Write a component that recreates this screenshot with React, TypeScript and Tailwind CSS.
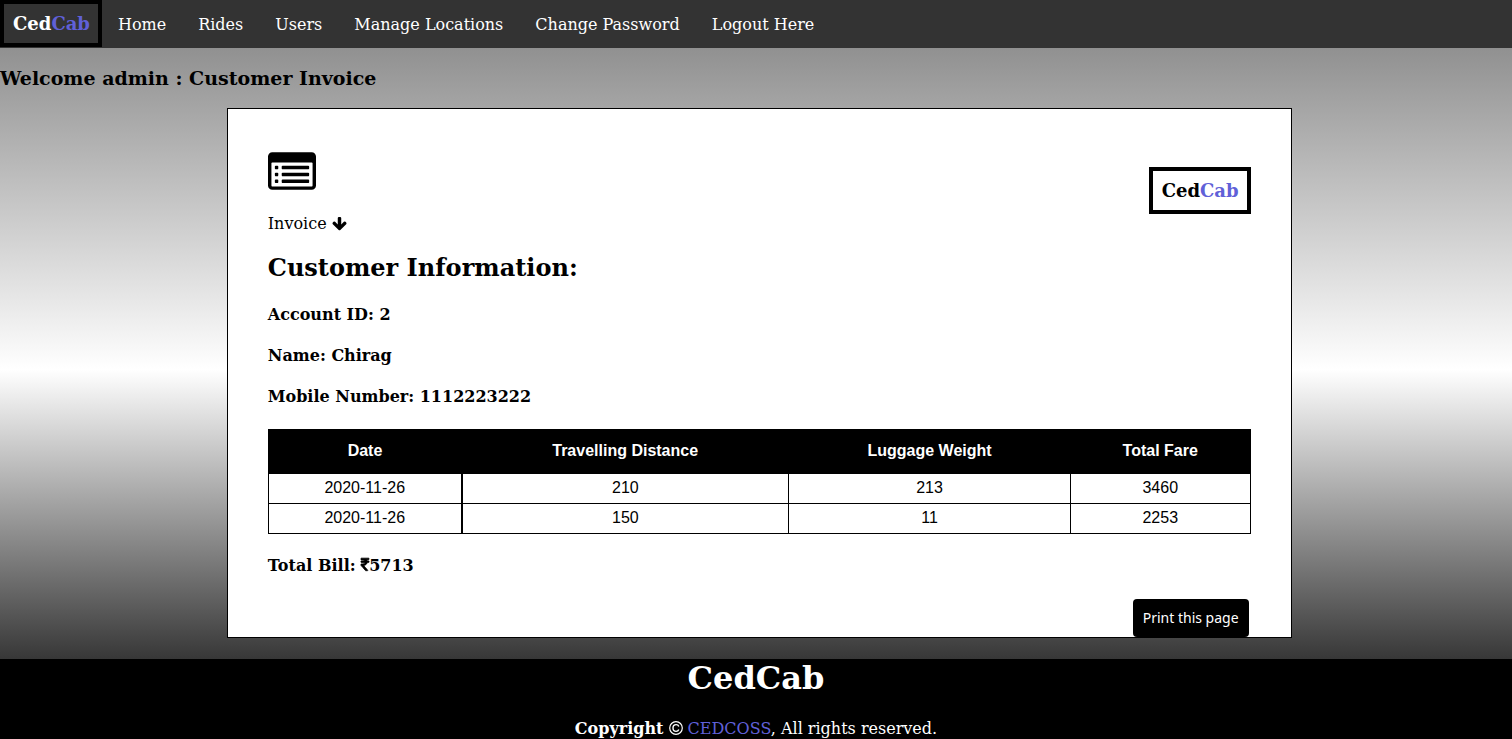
const navLinks = ["Home", "Rides", "Users", "Manage Locations", "Change Password", "Logout Here"];

const columns = [
  { label: "Date", width: "w-[19.7%]" },
  { label: "Travelling Distance", width: "w-[33.3%]" },
  { label: "Luggage Weight", width: "w-[28.7%]" },
  { label: "Total Fare", width: "w-[18.3%]" },
];

const rides = [
  ["2020-11-26", "210", "213", "3460"],
  ["2020-11-26", "150", "11", "2253"],
];

function Logo({ tone }: { tone: string }) {
  return (
    <a
      href="#"
      className={`block border-4 border-black py-2 pr-2 pl-[9px] text-lg leading-[23px] font-bold ${tone}`}
    >
      Ced<span className="text-[#6060d8]">Cab</span>
    </a>
  );
}

function ListIcon() {
  return (
    <svg viewBox="0 128 1792 1408" className="h-[38px] w-12" fill="currentColor" aria-hidden="true">
      <path d="M384 1184v64q0 13-9.5 22.5t-22.5 9.5h-64q-13 0-22.5-9.5t-9.5-22.5v-64q0-13 9.5-22.5t22.5-9.5h64q13 0 22.5 9.5t9.5 22.5zm0-256v64q0 13-9.5 22.5t-22.5 9.5h-64q-13 0-22.5-9.5t-9.5-22.5v-64q0-13 9.5-22.5t22.5-9.5h64q13 0 22.5 9.5t9.5 22.5zm0-256v64q0 13-9.5 22.5t-22.5 9.5h-64q-13 0-22.5-9.5t-9.5-22.5v-64q0-13 9.5-22.5t22.5-9.5h64q13 0 22.5 9.5t9.5 22.5zm1152 512v64q0 13-9.5 22.5t-22.5 9.5h-960q-13 0-22.5-9.5t-9.5-22.5v-64q0-13 9.5-22.5t22.5-9.5h960q13 0 22.5 9.5t9.5 22.5zm0-256v64q0 13-9.5 22.5t-22.5 9.5h-960q-13 0-22.5-9.5t-9.5-22.5v-64q0-13 9.5-22.5t22.5-9.5h960q13 0 22.5 9.5t9.5 22.5zm0-256v64q0 13-9.5 22.5t-22.5 9.5h-960q-13 0-22.5-9.5t-9.5-22.5v-64q0-13 9.5-22.5t22.5-9.5h960q13 0 22.5 9.5t9.5 22.5zm128 704v-832q0-13-9.5-22.5t-22.5-9.5h-1472q-13 0-22.5 9.5t-9.5 22.5v832q0 13 9.5 22.5t22.5 9.5h1472q13 0 22.5-9.5t9.5-22.5zm128-1088v1088q0 66-47 113t-113 47h-1472q-66 0-113-47t-47-113v-1088q0-66 47-113t113-47h1472q66 0 113 47t47 113z" />
    </svg>
  );
}

function ArrowDownIcon() {
  return (
    <svg viewBox="64 128 1664 1664" className="size-[15px]" fill="currentColor" aria-hidden="true">
      <path d="M1675 832q0 53-37 90l-651 652q-39 37-91 37-53 0-90-37l-651-652q-38-36-38-90 0-53 38-91l74-75q39-37 91-37 53 0 90 37l294 294v-704q0-52 38-90t90-38h128q52 0 90 38t38 90v704l294-294q37-37 90-37 52 0 91 37l75 75q37 39 37 91z" />
    </svg>
  );
}

function RupeeIcon() {
  return (
    <svg viewBox="447 256 898 1280" className="inline-block h-3 w-2 overflow-visible align-baseline" fill="currentColor" stroke="currentColor" strokeWidth="90" role="img" aria-label="Rupees">
      <path d="M1345 470v102q0 14-9 23t-23 9h-168q-23 144-129 234t-276 110q167 178 459 536 14 16 4 34-8 18-29 18h-195q-16 0-25-12-306-367-498-571-9-9-9-22v-127q0-13 9.5-22.5t22.5-9.5h112q132 0 212.5-43t102.5-125h-427q-14 0-23-9t-9-23v-102q0-14 9-23t23-9h413q-57-113-268-113h-145q-13 0-22.5-9.5t-9.5-22.5v-133q0-14 9-23t23-9h832q14 0 23 9t9 23v102q0 14-9 23t-23 9h-233q47 61 64 144h171q14 0 23 9t9 23z" />
    </svg>
  );
}

function CopyrightIcon() {
  return (
    <svg viewBox="0 0 14 14" className="inline-block size-[14px] align-[-1px]" fill="none" stroke="currentColor" role="img" aria-label="Copyright">
      <circle cx="7" cy="7" r="6.3" strokeWidth="1.2" />
      <path d="M9.8 5.5C9.4 4.2 8.4 3.6 7.1 3.6 5.2 3.6 4 5.1 4 7s1.2 3.4 3.1 3.4c1.3 0 2.3-.7 2.7-1.9" strokeWidth="1.4" />
    </svg>
  );
}

export default function App() {
  return (
    <div className="flex min-h-screen flex-col bg-[linear-gradient(#808080,#ffffff,#000000)] font-['DejaVu_Serif',serif] text-base leading-5 text-black">
      <nav className="flex min-h-12 flex-wrap items-start bg-[#333333] text-white">
        <Logo tone="text-white" />
        {navLinks.map((label) => (
          <a key={label} href="#" className="px-4 pt-[15px] pb-[13px]">
            {label}
          </a>
        ))}
      </nav>

      <h3 className="my-5 text-[19px] leading-5 font-bold">Welcome admin : Customer Invoice</h3>

      <main className="ml-[15%] box-content w-[65%] border border-black bg-white px-10">
        <section className="pt-[43px]">
          <div className="flex items-start justify-between">
            <div>
              <ListIcon />
              <p className="mt-6 flex items-center gap-[5px]">
                Invoice <ArrowDownIcon />
              </p>
            </div>
            <div className="pt-[15px]">
              <Logo tone="text-black" />
            </div>
          </div>

          <h2 className="mt-5 text-2xl leading-7 font-bold">Customer Information:</h2>
          <div className="mt-[23px] flex flex-col gap-[21px] font-bold">
            <h4>Account ID: 2</h4>
            <h4>Name: Chirag</h4>
            <h4>Mobile Number: 1112223222</h4>
          </div>

          <table className="mt-[22px] w-full border-collapse text-center font-['Liberation_Sans',sans-serif]">
            <thead>
              <tr className="bg-black text-white">
                {columns.map((column) => (
                  <th key={column.label} className={`border border-black pt-[11px] pb-3 font-bold ${column.width}`}>
                    {column.label}
                  </th>
                ))}
              </tr>
            </thead>
            <tbody>
              {rides.map((ride, row) => (
                <tr key={row}>
                  {ride.map((value, index) => (
                    <td key={index} className="border border-black pt-1 pb-[5px] first:border-r-2">
                      {value}
                    </td>
                  ))}
                </tr>
              ))}
            </tbody>
          </table>

          <h4 className="mt-[22px] font-bold">
            Total Bill: <RupeeIcon />5713
          </h4>
        </section>

        <div className="mt-[23px] flex justify-end pr-[2px]">
          <button
            type="button"
            onClick={() => window.print()}
            className="rounded bg-black px-[10px] py-[9px] font-['Noto_Sans',sans-serif] text-sm leading-5 text-white"
          >
            Print this page
          </button>
        </div>
      </main>

      <footer className="mt-[21px] grow bg-black text-center text-white">
        <h1 className="text-[32px] leading-[38px] font-bold">CedCab</h1>
        <p className="mt-[22px]">
          <b>Copyright</b> <CopyrightIcon /> <a href="#" className="text-[#6060d8]">CEDCOSS</a>, All rights reserved.
        </p>
      </footer>
    </div>
  );
}
